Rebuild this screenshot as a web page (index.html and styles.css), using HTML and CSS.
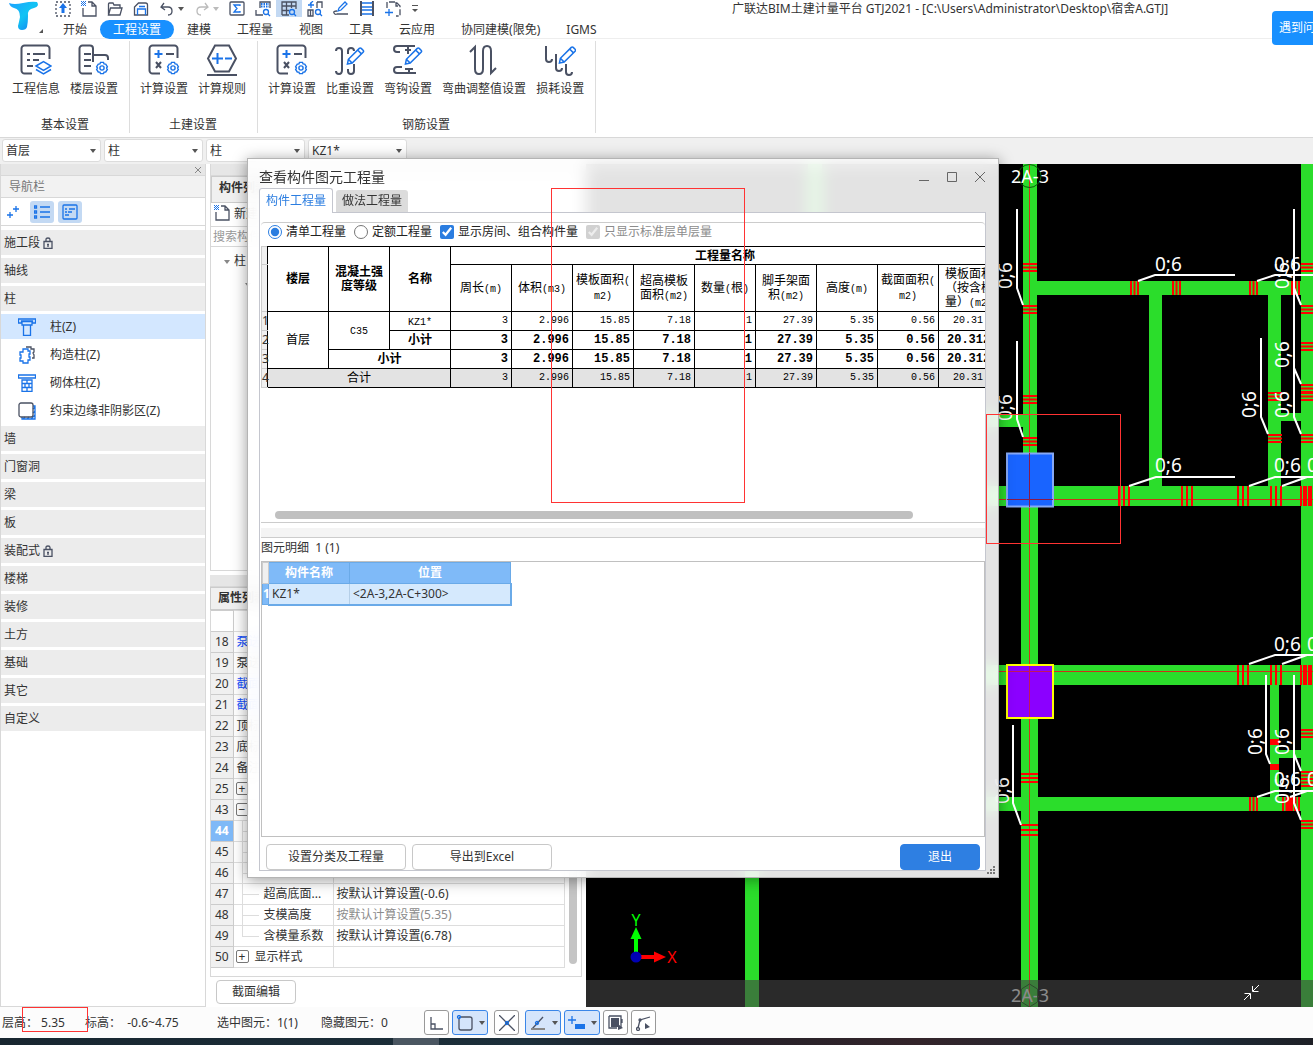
FILE: index.html
```html
<!DOCTYPE html>
<html lang="zh-CN">
<head>
    <meta charset="UTF-8">
    <meta name="viewport" content="width=device-width, initial-scale=1.0">
    <title>广联达BIM土建计量平台 GTJ2021</title>
    <link rel="stylesheet" href="styles.css">
</head>
<body>

<!-- shared icon parts -->
<svg class="defs" width="0" height="0">
    <symbol id="gear" viewBox="0 0 12 12">
        <path d="M4.7 1.2h2.6l.5 1.3 1.4.2 1.4 2.2-.7 1.1.7 1.2-1.4 2.2-1.4.1-.5 1.3H4.7l-.5-1.3-1.4-.1-1.4-2.2.7-1.2-.7-1.1 1.4-2.2 1.4-.2z" fill="#fff" stroke="#1a73e8" stroke-width="1.2"/>
        <circle cx="6" cy="6" r="1.8" fill="none" stroke="#1a73e8" stroke-width="1.2"/>
    </symbol>
    <symbol id="pencil" viewBox="0 0 20 20">
        <path d="M1.5 18.5l1-5L14 2q1-1 2 0l2 2q1 1 0 2L6.500 17.500zM2.500 13.500l4 4M12.500 4l3.500 3.500" fill="#fff" stroke="#1a73e8" stroke-width="1.600"/>
    </symbol>
    <symbol id="calc" viewBox="0 0 32 32">
        <path d="M12 29.500H4.500a3 3 0 0 1-3-3v-22a3 3 0 0 1 3-3h22a3 3 0 0 1 3 3V14" class="dk"/>
        <path d="M10.500 6v8M6.500 10h8" class="bl"/>
        <path d="M18 10h8M8 18l5 6M13 18l-5 6" class="dk"/>
        <use href="#gear" x="18" y="17" width="14" height="14"/>
    </symbol>
    <symbol id="newdoc" viewBox="0 0 16 16">
        <path d="M2 7v8h13V5l-4-4H7M11 1v4h4" class="dk thin"/>
        <path d="M0 0h1v1h-1zM2 0h1v1h-1zM4 0h1v1h-1zM1 1h1v1h-1zM3 1h1v1h-1zM0 2h1v1h-1zM2 2h1v1h-1zM4 2h1v1h-1zM1 3h1v1h-1zM3 3h1v1h-1zM0 4h1v1h-1zM2 4h1v1h-1zM4 4h1v1h-1z" fill="#1a73e8"/>
    </symbol>
</svg>

<header class="top">
    <div class="logo">
        <svg width="44" height="36" viewBox="0 0 44 36">
            <defs>
                <linearGradient id="lg" x1="0" y1="0" x2="1" y2="1">
                    <stop offset="0" stop-color="#1da0ff"/>
                    <stop offset=".5" stop-color="#12c4f4"/>
                    <stop offset="1" stop-color="#1274f0"/>
                </linearGradient>
            </defs>
            <path d="M9 3q5 2 14 0t14-1q3 4-3 6-7 1-6 8 0 6-1 11-1 3-5 3t-4-4q1-4 2-9 0-8-6-9-4-1-5-5z" fill="url(#lg)"/>
            <path d="M43 29v4h-4z" fill="#555"/>
        </svg>
    </div>
    <div class="bar">
        <div class="quick">
            <button class="q" title="导入"><svg width="16" height="16"><path d="M1 1h14v14H1z" class="dk thin" stroke-dasharray="2 2"/><path d="M8 2l4 5H9.500v5h-3V7H4z" fill="#1a73e8"/></svg></button>
            <button class="q" title="新建"><svg width="16" height="16"><use href="#newdoc"/></svg></button>
            <button class="q" title="打开"><svg width="16" height="16"><path d="M1.500 14V3q0-1 1-1H6l1 2h6v3M1.500 14l2-7H15l-2 7z" class="dk thin"/></svg></button>
            <button class="q" title="保存"><svg width="16" height="16"><path d="M1.500 14V6l4-4h7q2 0 2 2v10z" class="dk thin"/><path d="M4.500 14V8h8v6M6 5.500h6" class="bl thin"/></svg></button>
            <button class="q split" title="撤销"><svg width="16" height="16"><path d="M5 2L2 6l4 3M2 6h7q4 0 4 4t-4 4" class="dk thin"/></svg><i class="caret"></i></button>
            <button class="q split off" title="恢复"><svg width="16" height="16"><path d="M11 2l3 4-4 3M14 6H7q-4 0-4 4t4 4" fill="none" stroke="#bbb" stroke-width="1.300"/></svg><i class="caret"></i></button>
            <button class="q" title="汇总计算"><svg width="16" height="16"><rect x="1" y="1" width="14" height="13" rx="1" class="dk thin"/><path d="M11 5V4H5l3 3.500L5 11h6v-1" class="bl thin"/></svg></button>
            <button class="q" title="查看计算式"><svg width="16" height="16"><path d="M1 9V14h7M5 7V1h10v6" class="dk thin"/><path d="M6 3h8M6 5.500h8" class="bl" stroke-dasharray="1.500 1"/><circle cx="11" cy="11" r="2.500" class="bl thin"/><path d="M13 13l2 2" class="bl thin"/></svg></button>
            <button class="q on" title="查看工程量"><svg width="16" height="16"><path d="M1 14V1h14v7M1 14h7M5.500 1v13M10.500 1v6M1 5h14M1 9.500h7" class="dk thin"/><circle cx="11" cy="11" r="2.500" class="bl thin"/><path d="M13 13l2 2" class="bl thin"/></svg></button>
            <button class="q" title="查找"><svg width="16" height="16"><path d="M10 1h5v6M10 1v6M1 9h5v6H1zM3.500 9v6" class="dk thin"/><path d="M1 4h6M4 1v6M6 0L3 3" class="bl thin"/><circle cx="11" cy="11" r="2.500" class="bl thin"/><path d="M13 13l2 2" class="bl thin"/></svg></button>
            <button class="q" title="编辑"><svg width="16" height="16"><path d="M4 10q-4 0-3 2t3 1h11" class="dk thin"/><path d="M5 10l1-3 6-6 2 2-6 6z" class="bl thin"/></svg></button>
            <button class="q" title="楼层"><svg width="16" height="16"><path d="M2 0v15M14 0v15" class="dk"/><path d="M3 2h10M3 6h10M3 9h10M3 13h10" class="bl thin"/></svg></button>
            <button class="q" title="选择"><svg width="16" height="16"><path d="M2 7V1h9l4 4v10h-4M11 1v4h4" class="dk thin" stroke-dasharray="6 2"/><path d="M4 8v7M0 11.500h8" class="bl thin"/></svg></button>
            <button class="q more" title="更多"><svg width="8" height="10"><path d="M1 1.500h6" stroke="#555"/><path d="M1 5h6L4 8z" fill="#555"/></svg></button>
        </div>
        <h1>广联达BIM土建计量平台 GTJ2021 - [C:\Users\Administrator\Desktop\宿舍A.GTJ]</h1>
    </div>
    <nav class="tabs">
        <a href="#">开始</a>
        <a href="#" class="on">工程设置</a>
        <a href="#">建模</a>
        <a href="#">工程量</a>
        <a href="#">视图</a>
        <a href="#">工具</a>
        <a href="#">云应用</a>
        <a href="#">协同建模(限免)</a>
        <a href="#">IGMS</a>
    </nav>
    <button class="help">遇到问题</button>
</header>

<section class="ribbon">
    <div class="group">
        <div class="tools">
            <button><svg width="32" height="32"><path d="M12 29.500H4.500a3 3 0 0 1-3-3v-22a3 3 0 0 1 3-3h22a3 3 0 0 1 3 3V15M7 10h3M13 10h12M7 16h3M13 16h6M7 22h6" class="dk"/><path d="M16 22l7.500-4.500L31 22l-7.500 4.500zM16 25.500l7.500 4.500 7.500-4.500" fill="#fff" stroke="#1a73e8" stroke-width="1.500"/></svg>工程信息</button>
            <button><svg width="32" height="32"><path d="M14 29.500H4.500a3 3 0 0 1-3-3v-22a3 3 0 0 1 3-3H12a3 3 0 0 1 3 3V18M6 10h7M6 16h7M6 22h7M15 11h12q3 0 3 3v2" class="dk"/><use href="#gear" x="17" y="17" width="14" height="14"/></svg>楼层设置</button>
        </div>
        <p>基本设置</p>
    </div>
    <div class="group">
        <div class="tools">
            <button><svg width="32" height="32"><use href="#calc"/></svg>计算设置</button>
            <button><svg width="32" height="32"><path d="M9 1.500h14L30 14.500l-7 13H9L2 14.500zM1 31h30" class="dk"/><path d="M11.500 9v11M6 14.500h11M19 14.500h7" class="bl"/></svg>计算规则</button>
        </div>
        <p>土建设置</p>
    </div>
    <div class="group">
        <div class="tools">
            <button><svg width="32" height="32"><use href="#calc"/></svg>计算设置</button>
            <button><svg width="32" height="32"><path d="M2 7q0-3 3-3t3 3v19q0 4-3 4t-3-3M14 10V7q0-3 3-3t3 3M20 20v7q0 3-3 3t-3-3v-2" class="dk"/><use href="#pencil" x="12" y="2" width="19" height="20"/></svg>比重设置</button>
            <button><svg width="32" height="32"><path d="M23 2H5Q2 2 2 5t3 3h3M24 29H5q-3 0-3-3t3-3h5M16 3v7M13 6h6M17 24v5M13 25h8" class="dk"/><use href="#pencil" x="12" y="2" width="19" height="20"/></svg>弯钩设置</button>
            <button><svg width="32" height="32"><path d="M2 8l5-5v22q0 5 4 5t4-5V7q0-5 4-5t4 5v22l5-5" class="dk"/></svg>弯曲调整值设置</button>
            <button><svg width="32" height="32"><path d="M2 2v13q0 3 3 3t3-3M12 10v14q0 3 3 3t3-3M22 20v8q0 3 3 3t3-3" class="dk"/><use href="#pencil" x="14" y="1" width="19" height="20"/></svg>损耗设置</button>
        </div>
        <p>钢筋设置</p>
    </div>
</section>

<div class="combos">
    <label><select aria-label="楼层"><option>首层</option></select></label>
    <label><select aria-label="构件大类"><option>柱</option></select></label>
    <label><select aria-label="构件类型"><option>柱</option></select></label>
    <label><select aria-label="构件"><option>KZ1*</option></select></label>
</div>

<main class="work">
    <aside class="nav">
        <div class="strip"><button title="关闭"><svg width="8" height="8"><path d="M1 1l6 6M7 1L1 7" stroke="#888"/></svg></button></div>
        <h2>导航栏</h2>
        <div class="navtools">
            <button title="展开"><svg width="14" height="16"><path d="M9 2v6M6 5h6M3 8v6M0 11h6" class="bl thin"/></svg></button>
            <button title="列表" class="on"><svg width="16" height="14"><path d="M6 2h10M6 7h10M6 12h10M.5 1h2v2h-2zM.5 6h2v2h-2zM.5 11h2v2h-2z" class="bl thin"/></svg></button>
            <button title="详情" class="on"><svg width="16" height="16"><rect x="1" y="1" width="14" height="14" rx="1" class="bl thin"/><path d="M3 5h2M7 5h6M3 8h2M6 8h4M3 11h4" class="bl thin"/></svg></button>
        </div>
        <ul>
            <li class="cat">施工段<svg width="10" height="12"><path d="M1 4.500h8v7H1zM3 4V2.500Q3 1 5 1t2 1.500V4M5 7v3M4 7.500h2" class="dk thin"/></svg></li>
            <li class="cat">轴线</li>
            <li class="cat">柱</li>
            <li class="sub on"><svg width="18" height="18"><path d="M.5 1h17v4h-3V3H3.500v2h-3zM4 3.500h10V7H4zM5.500 7v10.500h7V7" class="bl thin"/></svg>柱(Z)</li>
            <li class="sub"><svg width="18" height="18"><path d="M8 1h5v2h3v3l-1 1 1 2v3h-2" class="dk thin"/><path d="M5 3h5v2h2v3h-1v3h1v3h-2v3H5v-2H2v-3h1V9H2V6h3z" class="bl thin"/></svg>构造柱(Z)</li>
            <li class="sub"><svg width="18" height="18"><path d="M.5 1h17v3H.5zM4 6v11.500h10V6zM4 9.500h10M4 13.500h10M9 6v3M7 10v4M11 10v4M9 14v3" class="bl thin"/></svg>砌体柱(Z)</li>
            <li class="sub"><svg width="18" height="18"><path d="M15 4h2v13H4v-2M15 7l2-2M15 11l2-2M13 17l4-4M9 17l2-2M5 17l2-2" class="bl thin"/><rect x="1" y="1" width="14" height="14" rx="2" class="dk thin"/></svg>约束边缘非阴影区(Z)</li>
            <li class="cat">墙</li>
            <li class="cat">门窗洞</li>
            <li class="cat">梁</li>
            <li class="cat">板</li>
            <li class="cat">装配式<svg width="10" height="12"><path d="M1 4.500h8v7H1zM3 4V2.500Q3 1 5 1t2 1.500V4M5 7v3M4 7.500h2" class="dk thin"/></svg></li>
            <li class="cat">楼梯</li>
            <li class="cat">装修</li>
            <li class="cat">土方</li>
            <li class="cat">基础</li>
            <li class="cat">其它</li>
            <li class="cat">自定义</li>
        </ul>
    </aside>

    <aside class="side">
        <section class="list">
            <div class="strip"></div>
            <h2>构件列表</h2>
            <div class="listtools"><button><svg width="16" height="16"><use href="#newdoc"/></svg>新建</button></div>
            <input type="search" aria-label="搜索构件" placeholder="搜索构件...">
            <div class="tree"><p><i class="caret"></i>柱</p><p class="lv2"><i class="caret"></i></p></div>
        </section>
        <section class="props">
            <div class="strip"></div>
            <h2>属性列表</h2>
            <div class="propscroll">
                <table>
                    <colgroup><col class="c-no"><col class="c-name"><col></colgroup>
                    <tr><th class="first"></th><td></td><td></td></tr>
                    <tr><th>18</th><td class="key">泵送类型</td><td></td></tr>
                    <tr><th>19</th><td>泵送高度</td><td></td></tr>
                    <tr><th>20</th><td class="key">截面周长</td><td></td></tr>
                    <tr><th>21</th><td class="key">截面面积</td><td></td></tr>
                    <tr><th>22</th><td>顶标高</td><td></td></tr>
                    <tr><th>23</th><td>底标高</td><td></td></tr>
                    <tr><th>24</th><td>备注</td><td></td></tr>
                    <tr><th>25</th><td><b class="box">+</b></td><td></td></tr>
                    <tr><th>43</th><td><b class="box">−</b></td><td></td></tr>
                    <tr><th class="on">44</th><td class="child"></td><td></td></tr>
                    <tr><th>45</th><td class="child"></td><td></td></tr>
                    <tr><th>46</th><td class="child"></td><td></td></tr>
                    <tr><th>47</th><td class="child">超高底面...</td><td>按默认计算设置(-0.6)</td></tr>
                    <tr><th>48</th><td class="child">支模高度</td><td class="dim">按默认计算设置(5.35)</td></tr>
                    <tr><th>49</th><td class="child last">含模量系数</td><td>按默认计算设置(6.78)</td></tr>
                    <tr><th>50</th><td><b class="box">+</b>显示样式</td><td></td></tr>
                </table>
                <div class="track"><i></i></div>
            </div>
            <button class="btn edit">截面编辑</button>
        </section>
    </aside>

    <section class="canvas">
        <svg viewBox="586 164 727 843" preserveAspectRatio="xMinYMin slice">
            <defs>
                <g id="tv" stroke="#f00" stroke-width="2"><path d="M1 0v14M4.500 0v14M8 0v14"/></g>
                <g id="tw" stroke="#f00" stroke-width="2"><path d="M1 0v20M6 0v20M11 0v20"/></g>
                <g id="th" stroke="#f00" stroke-width="2"><path d="M0 1h14M0 4.500h14M0 8h14"/></g>
            </defs>
            <rect x="586" y="164" width="727" height="843" fill="#000"/>
            <!-- beams -->
            <g fill="#2bdd2b">
                <path d="M1023 164h14v300h-14zM1021 490h17v517h-17zM1301 164h12v843h-12z"/>
                <path d="M1030 281h271v14h-271zM586 414h437v13H586zM586 486h727v20H586zM586 665h727v20H586zM586 797h715v14H586z"/>
                <path d="M1149 294h13v193h-13zM1268 294h13v193h-13zM1281 413h20v8h-20zM1270 685h9v112h-9zM1279 750h22v8h-22z"/>
                <path d="M745 506h14v501h-14zM808 164h14v322h-14z"/>
            </g>
            <g stroke="#d0301a" fill="none"><path d="M1029.500 164v843M999 499.500h314M999 671.500h314"/></g>
            <!-- stirrup marks -->
            <use href="#tv" x="1130" y="281"/><use href="#tv" x="1172" y="281"/><use href="#tv" x="1249" y="281"/><use href="#tv" x="1291" y="281"/>
            <use href="#tv" x="1249" y="797"/><use href="#tv" x="1282" y="797"/><use href="#tv" x="1287" y="797"/><use href="#tv" x="1291" y="797"/>
            <use href="#tw" x="1118" y="486"/><use href="#tw" x="1181" y="486"/><use href="#tw" x="1237" y="486"/><use href="#tw" x="1270" y="486"/><use href="#tw" x="1300" y="486"/><use href="#tw" x="1303" y="486"/>
            <use href="#tw" x="1237" y="665"/><use href="#tw" x="1270" y="665"/><use href="#tw" x="1300" y="665"/><use href="#tw" x="1303" y="665"/>
            <use href="#th" x="1023" y="263"/><use href="#th" x="1023" y="305"/><use href="#th" x="1023" y="395"/><use href="#th" x="1023" y="437"/>
            <use href="#th" x="1268" y="392"/><use href="#th" x="1268" y="434"/>
            <use href="#th" x="1301" y="263"/><use href="#th" x="1301" y="305"/><use href="#th" x="1301" y="342"/><use href="#th" x="1301" y="384"/><use href="#th" x="1301" y="392"/><use href="#th" x="1301" y="434"/>
            <use href="#th" x="1301" y="729"/><use href="#th" x="1301" y="771"/><use href="#th" x="1301" y="778"/><use href="#th" x="1301" y="820"/>
            <path d="M1021 774h17M1021 778h17M1021 782h17M1021 825h17M1021 830h17M1021 835h17" stroke="#f00" stroke-width="2"/>
            <path d="M1270 739h9v6h-9zM1270 764h9v6h-9z" fill="#f00"/>
            <!-- leaders -->
            <g stroke="#fff" stroke-width="2" fill="none">
                <path d="M1017 209v79l6 17M1017 341v78l6 18M1138 281l17-6h80M1257 281l18-6h38M1294 209v208l7 17M1294 288l7 17M1294 368l7 16M1261 338v79l7 17"/>
                <path d="M1129 486l27-9h79M1249 486l26-9h38M1282 486l25-9M1249 664l26-9h38M1282 664l25-9"/>
                <path d="M1013 725v78l8 22M1266 675v79l4 10M1294 675v128l7 17M1294 754l7 17M1257 797l18-6h38M1290 797l17-6"/>
            </g>
            <g class="tag">
                <text x="1155" y="271">0;6</text><text x="1274" y="271">0;6</text>
                <text x="1155" y="472">0;6</text><text x="1274" y="472">0;6</text><text x="1307" y="472">0;6</text>
                <text x="1274" y="651">0;6</text><text x="1307" y="651">0;6</text>
                <text x="1274" y="786">0;6</text><text x="1307" y="786">0;6</text>
                <text transform="translate(1012 289) rotate(-90)">0;6</text>
                <text transform="translate(1012 421) rotate(-90)">0;6</text>
                <text transform="translate(1256 418) rotate(-90)">0;6</text>
                <text transform="translate(1289 289) rotate(-90)">0;6</text>
                <text transform="translate(1289 368) rotate(-90)">0;6</text>
                <text transform="translate(1289 418) rotate(-90)">0;6</text>
                <text transform="translate(1262 755) rotate(-90)">0;6</text>
                <text transform="translate(1289 755) rotate(-90)">0;6</text>
                <text transform="translate(1289 804) rotate(-90)">0;6</text>
                <text transform="translate(1009 804) rotate(-90)">0;6</text>
            </g>
            <circle cx="1029.500" cy="176" r="11.500" fill="none" stroke="#0a5a0a"/>
            <text x="1030" y="183" class="axis">2A-3</text>
            <!-- columns -->
            <rect x="1007" y="453.500" width="46" height="53" fill="#1964ff" stroke="#86a8f5" stroke-width="2"/>
            <path d="M1029.500 453v54M1007 499.500h46" stroke="#8a1a4a"/>
            <rect x="1007" y="665" width="46" height="53" fill="#8b00ff" stroke="#ff0" stroke-width="2"/>
            <path d="M1029.500 666v51M1008 671.500h44" stroke="#c01a5a"/>
            <!-- axis tripod -->
            <path d="M636 957v-20" stroke="#0f0" stroke-width="4"/><path d="M630.500 939l5.500-12 5.500 12z" fill="#0f0"/>
            <path d="M640 957h15" stroke="#f00" stroke-width="4"/><path d="M654 951.500l12 5.500-12 5.500z" fill="#f00"/>
            <circle cx="636" cy="957" r="5.500" fill="#0000b4"/>
            <text x="636" y="926" class="xy" fill="#0f0">Y</text><text x="672" y="963" class="xy" fill="#f00">X</text>
            <text x="1030" y="1002" class="axis">2A-3</text>
            <path d="M1029.500 984l8 5v13l-8 5-8-5v-13z" fill="none" stroke="#0a5a0a"/>
            <path d="M586 980h727v27H586z" fill="#444" fill-opacity=".62"/>
            <path d="M1259 985l-6 6M1252.500 986v5.500h6M1244 1000l6-6M1250.500 999v-5.500h-6" stroke="#fff" fill="none"/>
        </svg>
    </section>
</main>

<footer class="status">
    <span class="s1">层高：&nbsp;5.35</span>
    <span class="s2">标高：&nbsp;&nbsp;-0.6~4.75</span>
    <span class="s3">选中图元：1(1)</span>
    <span class="s4">隐藏图元：0</span>
    <div class="snap">
        <button title="正交"><svg width="16" height="16"><path d="M2 2v12h12M2 9h4v5" class="dk thin"/></svg></button>
        <button title="捕捉" class="on"><svg width="18" height="16"><rect x="3" y="2" width="13" height="13" rx="2" class="dk thin"/><circle cx="3" cy="2" r="1.500" class="bl thin"/></svg><i class="caret"></i></button>
        <button title="交点" class="gap"><svg width="16" height="16"><path d="M0 0l16 16M16 0L0 16" class="dk thin"/><circle cx="8" cy="8" r="1.500" class="bl thin"/></svg></button>
        <button title="极轴" class="on gap"><svg width="18" height="16"><path d="M14 2L3 14" class="dk thin"/><path d="M2 14h14" stroke="#888" stroke-width="2"/><circle cx="8" cy="8" r="1.500" class="bl thin"/></svg><i class="caret"></i></button>
        <button title="动态输入" class="on"><svg width="18" height="16"><path d="M4 1v8M0 5h8" class="bl thin"/><path d="M7 9h10v5H7z" fill="#1a73e8"/></svg><i class="caret"></i></button>
        <button title="选择"><svg width="16" height="16"><path d="M3 3h8v9H3z" fill="#4a5163"/><path d="M1 1h12v11M1 1v12h8M14 4v4" class="dk thin"/><path d="M10 9l5 4-5 2z" fill="#4a5163"/></svg></button>
        <button title="折线"><svg width="16" height="16"><path d="M2 13L4 5l10-3" class="dk thin"/><circle cx="2" cy="14" r="1.500" class="dk thin"/><circle cx="4" cy="5" r="1" class="dk thin"/><path d="M9 8l5 4-5 2z" fill="#4a5163"/></svg></button>
    </div>
</footer>
<div class="taskbar"><i></i></div>

<!-- quantity window -->
<div class="dialog" role="dialog" aria-label="查看构件图元工程量">
    <div class="titlebar">
        <h2>查看构件图元工程量</h2>
        <button title="最小化"><svg width="12" height="12"><path d="M1 9.500h10" stroke="#666"/></svg></button>
        <button title="最大化"><svg width="12" height="12"><path d="M1.500 1.500h9v9h-9z" stroke="#666" fill="none"/></svg></button>
        <button title="关闭"><svg width="12" height="12"><path d="M1 1l10 10M11 1L1 11" stroke="#666"/></svg></button>
    </div>
    <div class="dtabs">
        <button class="on">构件工程量</button>
        <button>做法工程量</button>
    </div>
    <div class="pane">
        <section class="qty">
            <div class="opts">
                <label><input type="radio" name="kind" checked>清单工程量</label>
                <label><input type="radio" name="kind">定额工程量</label>
                <label><input type="checkbox" checked>显示房间、组合构件量</label>
                <label class="dim"><input type="checkbox" checked disabled>只显示标准层单层量</label>
            </div>
            <div class="clip">
                <table class="grid">
                    <colgroup><col class="c-g"><col span="12" class="c-w"></colgroup>
                    <tr class="h1"><th class="g"></th><th rowspan="2">楼层</th><th rowspan="2">混凝土强度等级</th><th rowspan="2">名称</th><th colspan="9">工程量名称</th></tr>
                    <tr class="h2"><th class="g"></th><td>周长<span>(m)</span></td><td>体积<span>(m3)</span></td><td>模板面积<span>(</span><br><span>m2)</span></td><td>超高模板面积<span>(m2)</span></td><td>数量<span>(</span>根<span>)</span></td><td>脚手架面积<span>(m2)</span></td><td>高度<span>(m)</span></td><td>截面面积<span>(</span><br><span>m2)</span></td><td>模板面积（按含模量）<span>(m2)</span></td></tr>
                    <tr><th class="g">1</th><td rowspan="3">首层</td><td rowspan="2"><span>C35</span></td><td><span>KZ1*</span></td><td class="n">3</td><td class="n">2.996</td><td class="n">15.85</td><td class="n">7.18</td><td class="n">1</td><td class="n">27.39</td><td class="n">5.35</td><td class="n">0.56</td><td class="n">20.31</td></tr>
                    <tr class="b"><th class="g">2</th><td>小计</td><td class="n">3</td><td class="n">2.996</td><td class="n">15.85</td><td class="n">7.18</td><td class="n">1</td><td class="n">27.39</td><td class="n">5.35</td><td class="n">0.56</td><td class="n">20.312</td></tr>
                    <tr class="b"><th class="g">3</th><td colspan="2">小计</td><td class="n">3</td><td class="n">2.996</td><td class="n">15.85</td><td class="n">7.18</td><td class="n">1</td><td class="n">27.39</td><td class="n">5.35</td><td class="n">0.56</td><td class="n">20.312</td></tr>
                    <tr class="sum"><th class="g">4</th><td colspan="3">合计</td><td class="n">3</td><td class="n">2.996</td><td class="n">15.85</td><td class="n">7.18</td><td class="n">1</td><td class="n">27.39</td><td class="n">5.35</td><td class="n">0.56</td><td class="n">20.31</td></tr>
                </table>
            </div>
            <div class="hbar"></div>
        </section>
        <section class="detail">
            <h3>图元明细&nbsp; 1 (1)</h3>
            <div class="sheet">
                <table>
                    <colgroup><col class="c-g"><col class="c-a"><col class="c-b"></colgroup>
                    <tr><th class="corner"></th><th>构件名称</th><th>位置</th></tr>
                    <tr><th>1</th><td>KZ1*</td><td>&lt;2A-3,2A-C+300&gt;</td></tr>
                </table>
            </div>
        </section>
        <div class="actions">
            <button class="btn">设置分类及工程量</button>
            <button class="btn">导出到Excel</button>
            <button class="btn primary">退出</button>
        </div>
    </div>
    <svg class="grip" width="9" height="9"><path d="M6 0h2v2H6zM3 3h2v2H3zM6 3h2v2H6zM0 6h2v2H0zM3 6h2v2H3zM6 6h2v2H6z" fill="#777"/></svg>
</div>

<!-- red marker frames -->
<div class="mark m1"></div>
<div class="mark m2"></div>
<div class="mark m3"></div>

</body>
</html>
```
FILE: styles.css
```css
* {
  box-sizing: border-box;
}

body {
  margin: 0;
  height: 100vh;
  display: flex;
  flex-direction: column;
  position: relative;
  overflow: hidden;
  background: #fff;
  color: #333;
  font: 12px/18px "Noto Sans", "Noto Sans CJK SC", sans-serif;
}

h1, h2, h3, p, ul {
  margin: 0;
  padding: 0;
  font-size: 12px;
  font-weight: normal;
  list-style: none;
}

button, input, select {
  font: inherit;
  color: inherit;
  margin: 0;
  padding: 0;
  border: 0;
  background: none;
}

a {
  color: inherit;
  text-decoration: none;
}

table {
  border-collapse: collapse;
  table-layout: fixed;
}

.defs {
  position: absolute;
}

.dk {
  fill: none;
  stroke: #4a5163;
  stroke-width: 2;
}

.bl {
  fill: none;
  stroke: #1a73e8;
  stroke-width: 2;
}

.thin {
  stroke-width: 1.3;
}

.caret {
  display: inline-block;
  border: 3px solid transparent;
  border-top: 4px solid #555;
  border-bottom: 0;
}

.dim {
  color: #8c8c8c;
}

/* header */
.top {
  display: grid;
  grid-template-columns: 50px 1fr;
  grid-template-rows: 20px 19px;
  border-bottom: 1px solid #eee;
  height: 39px;
  flex: none;
  position: relative;
}

.logo {
  grid-row: 1 / 3;
}

.bar {
  display: flex;
}

.quick {
  display: flex;
  width: 682px;
  height: 17px;
}

.q {
  width: 26px;
  height: 17px;
  display: flex;
  align-items: center;
  justify-content: center;
}

.q.split {
  width: 35px;
  gap: 3px;
}

.q.on {
  background: #c3d9f3;
}

.off .caret {
  border-top-color: #bbb;
}

.q.more {
  width: 18px;
}

.bar h1 {
  white-space: nowrap;
}

.tabs {
  display: flex;
  height: 19px;
}

.tabs a {
  padding: 0 13px;
  line-height: 19px;
}

.tabs .on {
  background: #1890ff;
  color: #fff;
  border-radius: 10px;
}

.help {
  position: absolute;
  right: 0;
  top: 11px;
  width: 41px;
  height: 34px;
  padding-left: 7px;
  overflow: hidden;
  white-space: nowrap;
  text-align: left;
  background: #1890ff;
  color: #fff;
  border-radius: 4px 0 0 4px;
}

/* ribbon */
.ribbon {
  display: flex;
  height: 98px;
  flex: none;
  padding: 2px 0 4px;
}

.group {
  display: flex;
  flex-direction: column;
  gap: 18px;
  padding: 3px 6px 0 5px;
  border-right: 1px solid #ddd;
  text-align: center;
}

.group:first-child {
  padding-left: 7px;
}

.tools {
  display: flex;
}

.tools button {
  display: flex;
  flex-direction: column;
  align-items: center;
  gap: 4px;
  padding: 0 5px;
}

/* drop-downs */
.combos {
  display: flex;
  gap: 3px;
  flex: none;
  height: 27px;
  padding: 1px 2px 2px;
  background: #f0f0f0;
  border-top: 1px solid #d8d8d8;
}

.combos label {
  position: relative;
  width: 99px;
}

.combos select {
  appearance: none;
  width: 100%;
  height: 23px;
  padding-left: 3px;
  background: #fff;
  border: 1px solid #dcdcdc;
  border-radius: 3px;
}

.combos label::after {
  content: "";
  position: absolute;
  right: 5px;
  top: 10px;
  border: 3px solid transparent;
  border-top: 4px solid #555;
  border-bottom: 0;
}

/* work area */
.work {
  flex: 1;
  display: flex;
  min-height: 0;
}

.strip {
  height: 12px;
  background: #e6e6e6;
  border-bottom: 1px solid #d8d8d8;
  display: flex;
  justify-content: flex-end;
  padding-right: 3px;
}

.strip button {
  display: flex;
  align-items: center;
}

.nav {
  width: 206px;
  flex: none;
  border: 1px solid #d8d8d8;
  border-top: 0;
}

.nav h2 {
  height: 22px;
  line-height: 21px;
  padding-left: 8px;
  background: #f2f2f2;
  border-bottom: 1px solid #d8d8d8;
  color: #777;
}

.navtools {
  display: flex;
  gap: 4px;
  padding: 3px 1px;
  height: 28px;
  border-bottom: 1px solid #d8d8d8;
}

.navtools button {
  width: 24px;
  height: 22px;
  display: flex;
  align-items: center;
  justify-content: center;
  border-radius: 3px;
}

.navtools .on {
  background: #c3d9f3;
}

.nav ul {
  display: flex;
  flex-direction: column;
  gap: 3px;
  padding-top: 4px;
}

.nav li {
  height: 25px;
  display: flex;
  align-items: center;
}

.cat {
  padding-left: 3px;
  gap: 3px;
  background: #ececec;
}

.sub {
  padding-left: 17px;
  gap: 14px;
}

.sub.on {
  background: #d3e7ff;
}

.side {
  width: 372px;
  margin: 0 4px;
  flex: none;
  display: flex;
  flex-direction: column;
  gap: 4px;
}

.list, .propscroll {
  border: 1px solid #d8d8d8;
}

.list {
  flex: 1;
  border-top: 0;
}

.list h2, .props h2 {
  width: 76px;
  padding-left: 7px;
  font-weight: bold;
  background: #f0f0f0;
  border: 1px solid #ccc;
}

.list h2 {
  height: 27px;
  line-height: 22px;
}

.props h2 {
  height: 23px;
  line-height: 20px;
}

.listtools {
  height: 24px;
  border-bottom: 1px solid #d8d8d8;
}

.listtools button {
  display: flex;
  gap: 4px;
  padding: 2px 3px;
}

.list input {
  display: block;
  width: 100%;
  height: 20px;
  padding: 0 2px;
  border-bottom: 1px solid #d8d8d8;
}

.list input::placeholder {
  color: #999;
}

.tree p {
  padding: 5px 0 0 13px;
}

.tree .caret {
  margin-right: 4px;
  border-top-color: #888;
  vertical-align: middle;
}

.tree .lv2 {
  padding-left: 34px;
}

.props {
  flex: none;
}

.propscroll {
  display: flex;
  justify-content: space-between;
  border-top: 0;
  padding-bottom: 8px;
}

.propscroll table {
  width: 354px;
}

.c-no {
  width: 22px;
}

.c-name {
  width: 100px;
}

.propscroll tr {
  height: 21px;
}

.propscroll th {
  padding: 0;
  font-weight: normal;
  background: #f0f0f0;
  border: 1px solid #ccc;
  border-left: 0;
}

.propscroll th.first {
  background: #fff;
}

.propscroll th.on {
  background: #7fb9f7;
  color: #fff;
  font-weight: bold;
}

.propscroll td {
  padding: 0 3px;
  border: 1px solid #ddd;
  line-height: 20px;
  white-space: nowrap;
}

.propscroll .key {
  color: #1450ff;
}

.propscroll .child {
  padding-left: 30px;
  background: linear-gradient(#ddd, #ddd) 8px 0 / 1px 100% no-repeat, linear-gradient(#ddd, #ddd) 8px 10px / 17px 1px no-repeat;
}

.propscroll .last {
  background-size: 1px 10px, 17px 1px;
}

.box {
  display: inline-block;
  width: 13px;
  height: 13px;
  margin: 0 6px 0 -1px;
  border: 1px solid #777;
  border-radius: 2px;
  font-weight: normal;
  line-height: 11px;
  text-align: center;
}

.track {
  width: 12px;
  display: flex;
  align-items: flex-end;
}

.track i {
  width: 8px;
  height: 200px;
  margin-bottom: 4px;
  border-radius: 4px;
  background: #c4c4c4;
}

.btn {
  height: 26px;
  width: 140px;
  background: #fff;
  border: 1px solid #c8c8c8;
  border-radius: 4px;
}

.edit {
  width: 80px;
  height: 24px;
  margin: 3px 0 3px 6px;
  display: block;
}

.canvas {
  flex: 1;
  min-width: 0;
  background: #000;
}

.canvas svg {
  display: block;
  width: 100%;
  height: 100%;
}

.tag text {
  font-size: 19px;
  fill: #fff;
}

.axis {
  font-size: 18px;
  fill: #fff;
  text-anchor: middle;
}

.xy {
  font-size: 16px;
  text-anchor: middle;
}

/* status bar */
.status {
  height: 31px;
  flex: none;
  display: flex;
  align-items: center;
  padding-left: 2px;
  background: #fcfcfc;
}

.s1 { width: 83px; }
.s2 { width: 132px; }
.s3 { width: 104px; }
.s4 { width: 103px; }

.snap {
  display: flex;
  gap: 3px;
}

.snap button {
  min-width: 25px;
  height: 25px;
  display: flex;
  align-items: center;
  justify-content: center;
  gap: 5px;
  border: 1px solid #999;
  border-radius: 3px;
  background: #fff;
}

.snap .gap {
  margin-left: 3px;
}

.snap .on {
  width: 36px;
  border-color: #3a86e8;
  background: #d5e5fb;
}

.taskbar {
  height: 7px;
  flex: none;
  padding-left: 393px;
  background: linear-gradient(90deg, #182630 0%, #1c2f3a 40%, #1f1f28 50%, #33242a 70%, #1c2b38 90%, #1e2026 100%);
}

.taskbar i {
  display: block;
  width: 46px;
  height: 7px;
  background: #4a5661;
}

/* floating window */
.dialog {
  position: absolute;
  left: 247px;
  top: 158px;
  width: 752px;
  height: 720px;
  padding: 6px 12px 6px 11px;
  display: flex;
  flex-direction: column;
  background: rgba(255, 255, 255, .89);
  backdrop-filter: blur(8px);
  border: 1px solid #b4b4b4;
  box-shadow: 0 2px 14px rgba(0, 0, 0, .4);
}

.titlebar {
  display: flex;
  align-items: center;
  gap: 16px;
  height: 23px;
  flex: none;
}

.titlebar h2 {
  flex: 1;
  font-size: 14px;
}

.titlebar button {
  display: flex;
}

.dtabs {
  display: flex;
  align-items: flex-end;
  gap: 3px;
  height: 25px;
  flex: none;
  margin-bottom: -1px;
  z-index: 1;
}

.dtabs button {
  width: 72px;
  height: 22px;
  margin-bottom: 1px;
  background: #dcdcdc;
  border-radius: 3px 3px 0 0;
}

.dtabs .on {
  width: 74px;
  height: 25px;
  margin-bottom: 0;
  background: #fff;
  border: 1px solid #c4c6ce;
  border-bottom: 0;
  color: #2b7de0;
}

.pane {
  flex: 1;
  display: flex;
  flex-direction: column;
  padding: 9px 0 0 1px;
  background: #fff;
  border: 1px solid #c4c6ce;
}

.qty {
  height: 301px;
  display: flex;
  flex-direction: column;
  border: 1px solid #ccc;
  border-width: 1px 0;
  border-radius: 4px 4px 0 0;
}

.opts {
  display: flex;
  gap: 8px;
  padding: 0 7px;
  height: 23px;
  align-items: flex-start;
  color: #222;
}

.opts label {
  display: flex;
  align-items: center;
  gap: 4px;
}

.opts .dim {
  color: #8c8c8c;
}

.opts input {
  width: 14px;
  height: 14px;
  accent-color: #2b7de0;
}

.clip {
  flex: 1;
  overflow: hidden;
}

.grid {
  width: 738px;
  color: #000;
  line-height: 14px;
}

.c-g {
  width: 6px;
}

.c-w {
  width: 61px;
}

.grid tr {
  height: 19px;
}

.grid .h1 {
  height: 18px;
}

.grid .h2 {
  height: 47px;
}

.grid th, .grid td {
  padding: 0 3px;
  border: 1px solid #000;
  text-align: center;
}

.grid .h2 td {
  padding: 0 2px;
}

.grid .g {
  padding: 0;
  border-color: #ccc #000 #ccc #ccc;
  background: #f0f0f0;
  color: #333;
  font-weight: normal;
}

.grid span, .grid .n {
  font-family: "Liberation Mono", monospace;
  font-size: 10px;
}

.grid span {
  line-height: 12px;
}

.grid .n {
  text-align: right;
}

.grid tr:not(.h1) td:last-child.n {
  text-align: left;
  padding-left: 14px;
}

.b {
  font-weight: bold;
}

.grid .b .n {
  font-size: 12px;
}

.grid tr.b td:last-child.n {
  padding-left: 8px;
}

.sum {
  background: #e3e3e3;
}

.hbar {
  width: 638px;
  height: 8px;
  margin: 0 0 3px 14px;
  border-radius: 4px;
  background: #c0c0c0;
}

.detail {
  flex: 1;
  display: flex;
  flex-direction: column;
  margin-top: 5px;
  border-top: 9px solid #f4f4f4;
}

.detail h3 {
  height: 24px;
  line-height: 20px;
  border-top: 1px solid #ccc;
}

.sheet {
  flex: 1;
  border: 1px solid #c0c0c0;
}

.sheet table {
  width: 248px;
}

.sheet tr {
  height: 21px;
}

.c-a {
  width: 81px;
}

.c-b {
  width: 161px;
}

.sheet th {
  padding: 0;
  background: #7fbaf8;
  border: 1px solid #6aaae8;
  color: #fff;
}

.sheet .corner {
  background: #f0f0f0;
  border-color: #ccc;
}

.sheet td {
  padding: 0 3px;
  background: #d5e9fd;
  border: 1px solid #b5cfe8;
  border-bottom: 2px solid #6aaae8;
}

.sheet td:last-child {
  border-right: 2px solid #6aaae8;
}

.actions {
  display: flex;
  gap: 6px;
  padding: 7px 5px 0;
  height: 33px;
}

.primary {
  width: 80px;
  margin-left: auto;
  background: #2e7fe2;
  border-color: #2e7fe2;
  color: #fff;
}

.grip {
  position: absolute;
  right: 2px;
  bottom: 2px;
}

/* markers */
.mark {
  position: absolute;
  border: 1px solid #f33;
  pointer-events: none;
}

.m1 {
  left: 551px;
  top: 188px;
  width: 194px;
  height: 315px;
}

.m2 {
  left: 986px;
  top: 414px;
  width: 135px;
  height: 130px;
}

.m3 {
  left: 22px;
  top: 1007px;
  width: 66px;
  height: 25px;
}
```
